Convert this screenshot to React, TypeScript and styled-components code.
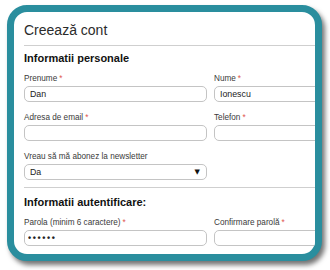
import React from "react";
import styled, { createGlobalStyle } from "styled-components";

const GlobalStyle = createGlobalStyle`
  html, body {
    margin: 0;
    padding: 0;
    background: #ffffff;
  }
  body {
    font-family: "Liberation Sans", Arial, sans-serif;
  }
`;

const Page = styled.div`
  width: 330px;
  height: 270px;
  padding: 5px 0 0 7px;
  box-sizing: border-box;
`;

const Frame = styled.div`
  width: 315px;
  height: 256px;
  box-sizing: border-box;
  border: 7px solid #2a8e9e;
  border-radius: 20px;
  background: #ffffff;
  overflow: hidden;
  box-shadow: 3px 4px 5px rgba(0, 0, 0, 0.55);
`;

const Content = styled.div`
  width: 400px;
  padding: 10px 0 0 10px;
`;

const Title = styled.h1`
  margin: 0;
  font-size: 14px;
  line-height: 16px;
  font-weight: normal;
  color: #2b2b2b;
  padding-bottom: 7px;
  border-bottom: 1px solid #cfcfcf;
`;

const SectionTitle = styled.h2<{ $top: number }>`
  margin: ${(p) => p.$top}px 0 8px;
  font-size: 11px;
  line-height: 13px;
  font-weight: bold;
  color: #111111;
`;

const Row = styled.div`
  display: flex;
  gap: 7px;
`;

const Field = styled.div<{ $last?: boolean }>`
  width: 183px;
  display: flex;
  flex-direction: column;
  margin-bottom: ${(p) => (p.$last ? 7 : 10)}px;
`;

const Label = styled.label`
  font-size: 8.2px;
  line-height: 11px;
  color: #3a3a3a;
  margin-bottom: 2px;
`;

const Required = styled.span`
  color: #e0584f;
  margin-left: 2px;
`;

const Input = styled.input`
  box-sizing: border-box;
  width: 183px;
  height: 16px;
  margin: 0;
  padding: 0 5px;
  border: 1px solid #c4c4c4;
  border-radius: 5px;
  background: #ffffff;
  font-family: "Liberation Sans", Arial, sans-serif;
  font-size: 8.8px;
  color: #222222;
  outline: none;

  &[type="password"] {
    font-size: 9px;
    letter-spacing: 1.6px;
    font-weight: bold;
    padding-left: 3px;
  }
`;

const Select = styled.div`
  box-sizing: border-box;
  width: 183px;
  height: 16px;
  padding: 0 6px 0 5px;
  border: 1px solid #c4c4c4;
  border-radius: 5px;
  display: flex;
  align-items: center;
  justify-content: space-between;
  font-size: 8.8px;
  color: #222222;
`;

const Arrow = styled.span`
  font-family: "DejaVu Sans", sans-serif;
  font-size: 7px;
  color: #111111;
`;

const Divider = styled.div`
  border-top: 1px solid #cfcfcf;
`;

interface FieldProps {
  label: string;
  required?: boolean;
  value?: string;
  type?: string;
  last?: boolean;
}

const FormField = ({ label, required, value = "", type = "text", last }: FieldProps) => (
  <Field $last={last}>
    <Label>
      {label}
      {required && <Required>*</Required>}
    </Label>
    <Input type={type} defaultValue={value} readOnly />
  </Field>
);

export default function App() {
  return (
    <>
      <GlobalStyle />
      <Page>
        <Frame>
          <Content>
            <Title>Creează cont</Title>
            <SectionTitle $top={6}>Informatii personale</SectionTitle>
            <Row>
              <FormField label="Prenume" required value="Dan" />
              <FormField label="Nume" required value="Ionescu" />
            </Row>
            <Row>
              <FormField label="Adresa de email" required />
              <FormField label="Telefon" required />
            </Row>
            <Field $last>
              <Label>Vreau să mă abonez la newsletter</Label>
              <Select>
                <span>Da</span>
                <Arrow>▼</Arrow>
              </Select>
            </Field>
            <Divider />
            <SectionTitle $top={8}>Informatii autentificare:</SectionTitle>
            <Row>
              <FormField label="Parola (minim 6 caractere)" required type="password" value="secret" />
              <FormField label="Confirmare parolă" required type="password" />
            </Row>
          </Content>
        </Frame>
      </Page>
    </>
  );
}
